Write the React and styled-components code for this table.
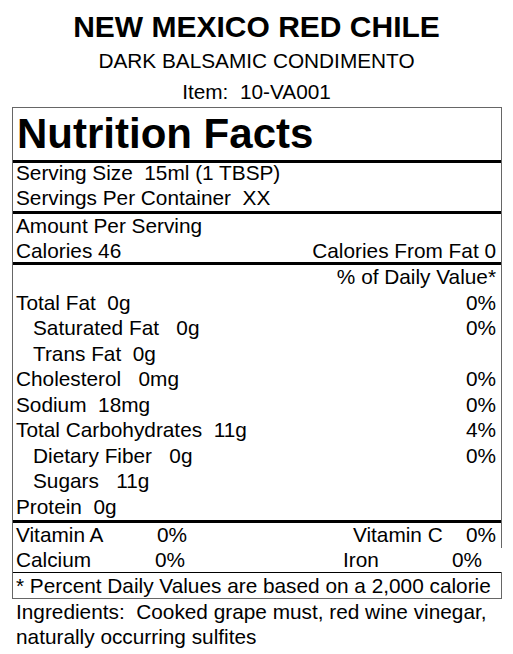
import styled, { createGlobalStyle } from 'styled-components';

const GlobalStyle = createGlobalStyle`
  body {
    margin: 0;
    background: #fff;
    color: #000;
    font-family: "Liberation Sans", Arial, sans-serif;
  }
`;

const Page = styled.div`
  width: 513px;
  height: 654px;
  overflow: hidden;
  background: #fff;
`;

const Header = styled.header`
  display: flex;
  flex-direction: column;
  align-items: center;
  padding-top: 8px;
`;

const ProductName = styled.h1`
  margin: 0;
  font-size: 30px;
  font-weight: 700;
  line-height: 37px;
`;

const HeaderLine = styled.div`
  font-size: 20.8px;
  line-height: 31px;
  white-space: pre;
`;

const Label = styled.section`
  margin: 0 11px 0 12px;
  border: 1px solid #666;
`;

const Title = styled.h2`
  margin: 0;
  height: 52px;
  padding-left: 4px;
  font-size: 42px;
  font-weight: 700;
  line-height: 52px;
`;

const Section = styled.div`
  border-top: ${(p) => (p.$thin ? '1px' : '3px')} solid #000;
`;

const Row = styled.div`
  display: flex;
  justify-content: space-between;
  height: ${(p) => p.$h}px;
  padding: 0 5px 0 ${(p) => (p.$indent ? 20 : 3)}px;
  font-size: 20.8px;
  line-height: ${(p) => p.$lh}px;
  white-space: pre;
`;

// second vitamin row runs past the frame in the print, hiding the right rule
const VitRow = styled(Row)`
  padding-right: ${(p) => p.$inset}px;
  margin-right: ${(p) => (p.$open ? -1 : 0)}px;
  background: #fff;
`;

const Pair = styled.div`
  display: flex;
`;

const PairLabel = styled.span`
  width: ${(p) => p.$w}px;
`;

const Ingredients = styled.p`
  margin: 0;
  padding-left: 16px;
  font-size: 20.8px;
  line-height: 25px;
`;

const nutrients = [
  { name: 'Total Fat  0g', dv: '0%' },
  { name: 'Saturated Fat   0g', dv: '0%', indent: true },
  { name: 'Trans Fat  0g', indent: true },
  { name: 'Cholesterol   0mg', dv: '0%' },
  { name: 'Sodium  18mg', dv: '0%' },
  { name: 'Total Carbohydrates  11g', dv: '4%' },
  { name: 'Dietary Fiber   0g', dv: '0%', indent: true },
  { name: 'Sugars   11g', indent: true },
  { name: 'Protein  0g' },
];

const vitamins = [
  { a: 'Vitamin A', aw: 141, b: 'Vitamin C', bw: 113, inset: 5 },
  { a: 'Calcium', aw: 139, b: 'Iron', bw: 109, inset: 20, open: true },
];

export default function App() {
  return (
    <Page>
      <GlobalStyle />
      <Header>
        <ProductName>NEW MEXICO RED CHILE</ProductName>
        <HeaderLine>DARK BALSAMIC CONDIMENTO</HeaderLine>
        <HeaderLine>Item:  10-VA001</HeaderLine>
      </Header>

      <Label>
        <Title>Nutrition Facts</Title>

        <Section>
          <Row $h={24} $lh={20}>Serving Size  15ml (1 TBSP)</Row>
          <Row $h={24} $lh={22}>Servings Per Container  XX</Row>
        </Section>

        <Section>
          <Row $h={24} $lh={24}>Amount Per Serving</Row>
          <Row $h={24} $lh={26}>
            <span>Calories 46</span>
            <span>Calories From Fat 0</span>
          </Row>
        </Section>

        <Section>
          <Row $h={25.5} $lh={23} style={{ justifyContent: 'flex-end' }}>
            % of Daily Value*
          </Row>
          {nutrients.map((n) => (
            <Row key={n.name} $h={25.5} $lh={23} $indent={n.indent}>
              <span>{n.name}</span>
              <span>{n.dv}</span>
            </Row>
          ))}
        </Section>

        <Section>
          {vitamins.map((v) => (
            <VitRow key={v.a} $h={24.5} $lh={24} $inset={v.inset} $open={v.open}>
              <Pair>
                <PairLabel $w={v.aw}>{v.a}</PairLabel>
                <span>0%</span>
              </Pair>
              <Pair>
                <PairLabel $w={v.bw}>{v.b}</PairLabel>
                <span>0%</span>
              </Pair>
            </VitRow>
          ))}
        </Section>

        <Section $thin>
          <Row $h={25} $lh={25}>* Percent Daily Values are based on a 2,000 calorie</Row>
        </Section>
      </Label>

      <Ingredients>
        Ingredients:&nbsp; Cooked grape must, red wine vinegar,
        <br />
        naturally occurring sulfites
      </Ingredients>
    </Page>
  );
}
